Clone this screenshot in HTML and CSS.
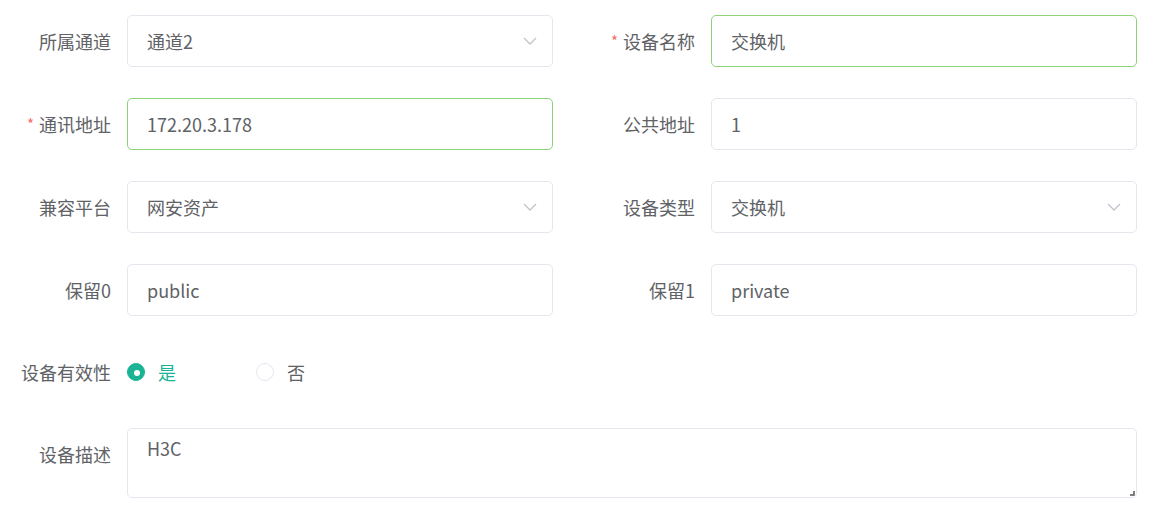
FILE: index.html
```html
<!DOCTYPE html>
<html lang="zh-CN">
<head>
    <meta charset="UTF-8">
    <meta name="viewport" content="width=device-width, initial-scale=1.0">
    <title>设备编辑</title>
    <link rel="stylesheet" href="styles.css">
</head>
<body>
    <form class="device-form">
        <div class="form-grid">
            <div class="form-item">
                <label class="form-label">所属通道</label>
                <div class="form-control select">
                    <span class="control-text">通道2</span>
                    <svg class="arrow" width="14" height="8" viewBox="0 0 14 8"><path d="M1 1 L7 7 L13 1" fill="none" stroke="#c0c4cc" stroke-width="1.3"/></svg>
                </div>
            </div>
            <div class="form-item">
                <label class="form-label required">设备名称</label>
                <div class="form-control success">
                    <span class="control-text">交换机</span>
                </div>
            </div>

            <div class="form-item">
                <label class="form-label required">通讯地址</label>
                <div class="form-control success">
                    <span class="control-text">172.20.3.178</span>
                </div>
            </div>
            <div class="form-item">
                <label class="form-label">公共地址</label>
                <div class="form-control">
                    <span class="control-text">1</span>
                </div>
            </div>

            <div class="form-item">
                <label class="form-label">兼容平台</label>
                <div class="form-control select">
                    <span class="control-text">网安资产</span>
                    <svg class="arrow" width="14" height="8" viewBox="0 0 14 8"><path d="M1 1 L7 7 L13 1" fill="none" stroke="#c0c4cc" stroke-width="1.3"/></svg>
                </div>
            </div>
            <div class="form-item">
                <label class="form-label">设备类型</label>
                <div class="form-control select">
                    <span class="control-text">交换机</span>
                    <svg class="arrow" width="14" height="8" viewBox="0 0 14 8"><path d="M1 1 L7 7 L13 1" fill="none" stroke="#c0c4cc" stroke-width="1.3"/></svg>
                </div>
            </div>

            <div class="form-item">
                <label class="form-label">保留0</label>
                <div class="form-control">
                    <span class="control-text">public</span>
                </div>
            </div>
            <div class="form-item">
                <label class="form-label">保留1</label>
                <div class="form-control">
                    <span class="control-text">private</span>
                </div>
            </div>

            <div class="form-item wide radio-row">
                <label class="form-label">设备有效性</label>
                <div class="radio-group">
                    <span class="radio checked"><span class="radio-dot"></span><span class="radio-text">是</span></span>
                    <span class="radio"><span class="radio-dot"></span><span class="radio-text">否</span></span>
                </div>
            </div>

            <div class="form-item wide">
                <label class="form-label">设备描述</label>
                <div class="form-control textarea">
                    <span class="control-text">H3C</span>
                    <svg class="grip" width="6" height="6" viewBox="0 0 6 6"><path d="M5 1 L5 5 L1 5" fill="none" stroke="#555" stroke-width="1.5"/></svg>
                </div>
            </div>
        </div>
    </form>
</body>
</html>
```

FILE: styles.css
```css
body {
    margin: 0;
    background-color: #ffffff;
    font-family: "Noto Sans CJK SC", "Noto Sans", sans-serif;
    font-size: 18px;
    color: #606266;
}
.device-form {
    padding: 15px 32px 0 0;
}
.form-grid {
    display: grid;
    grid-template-columns: 1fr 1fr;
    column-gap: 31px;
    row-gap: 31px;
}
.form-item {
    display: flex;
    align-items: flex-start;
}
.form-item.wide {
    grid-column: 1 / 3;
}
.form-label {
    flex: 0 0 127px;
    box-sizing: border-box;
    height: 52px;
    padding-right: 16px;
    text-align: right;
    line-height: 52px;
    white-space: nowrap;
    overflow: hidden;
}
.form-label.required::before {
    content: "*";
    color: #f56c6c;
    margin-right: 5px;
    font-size: 15px;
    line-height: 1;
    vertical-align: 2px;
}
.form-control {
    flex: 1;
    position: relative;
    height: 52px;
    box-sizing: border-box;
    border: 1px solid #e4e7ed;
    border-radius: 5px;
    padding: 0 19px;
    display: flex;
    align-items: center;
    justify-content: space-between;
}
.form-control.success {
    border-color: #8fd27a;
}
.control-text {
    line-height: 1;
}
.arrow {
    margin-right: -4px;
}
.form-control.textarea {
    height: 70px;
    align-items: flex-start;
    padding-top: 10px;
}
.grip {
    position: absolute;
    right: 1px;
    bottom: 1px;
}
.radio-row .form-label {
    height: 50px;
    line-height: 50px;
}
.radio-group {
    display: flex;
    align-items: center;
    height: 50px;
}
.radio {
    display: flex;
    align-items: center;
    width: 129px;
}
.radio-dot {
    width: 18px;
    height: 18px;
    box-sizing: border-box;
    border-radius: 50%;
    border: 1px solid #e4e7ed;
    margin-right: 13px;
    position: relative;
}
.radio.checked .radio-dot {
    background-color: #1ab394;
    border-color: #1ab394;
}
.radio.checked .radio-dot::after {
    content: "";
    position: absolute;
    left: 6px;
    top: 6px;
    width: 6px;
    height: 6px;
    border-radius: 50%;
    background-color: #ffffff;
}
.radio.checked .radio-text {
    color: #1ab394;
}
```
